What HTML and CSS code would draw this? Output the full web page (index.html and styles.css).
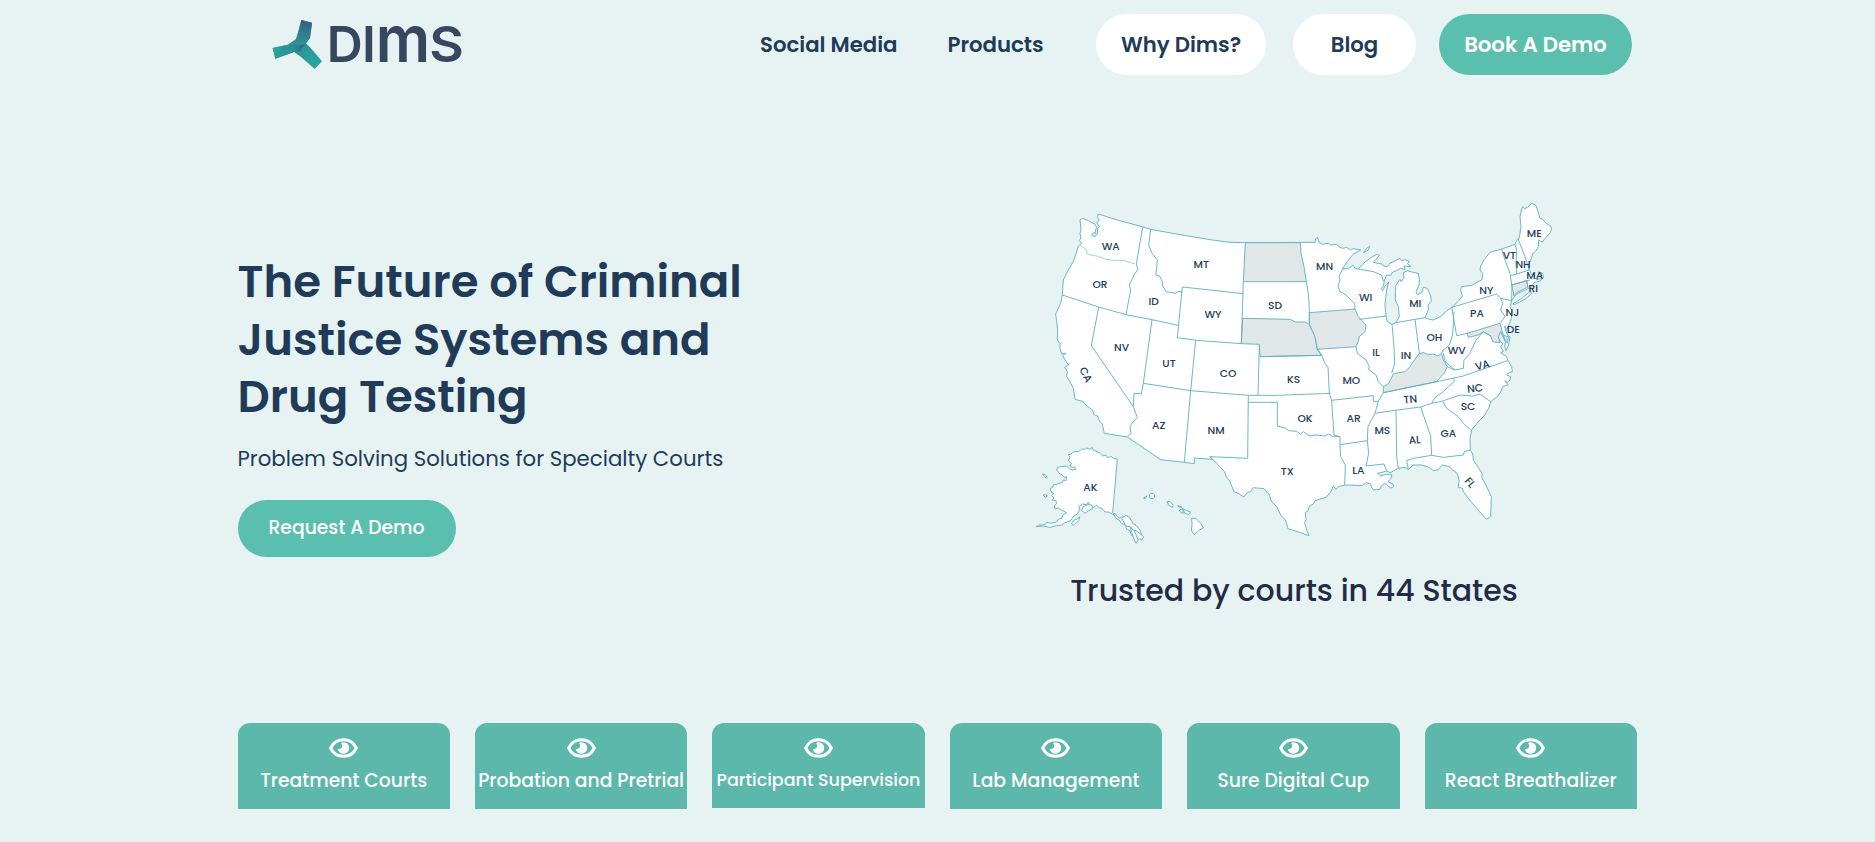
FILE: index.html
```html
<!DOCTYPE html>
<html lang="en">
<head>
<meta charset="utf-8">
<title>DIMS</title>
<link rel="stylesheet" href="styles.css">
</head>
<body>
<svg class="defs" aria-hidden="true">
  <defs>
    <linearGradient id="armA" x1="0" y1="0" x2="0" y2="1"><stop offset="0" stop-color="#36617f"/><stop offset="1" stop-color="#2f9297"/></linearGradient>
    <linearGradient id="armB" x1="0" y1="0" x2="1" y2="0"><stop offset="0" stop-color="#27a59c"/><stop offset=".6" stop-color="#2b8d93"/><stop offset="1" stop-color="#355f7e"/></linearGradient>
    <linearGradient id="armC" x1="0" y1="0" x2=".7" y2="1"><stop offset="0" stop-color="#35607d"/><stop offset=".5" stop-color="#2c8b93"/><stop offset="1" stop-color="#26a59c"/></linearGradient>
    <symbol id="eye" viewBox="0 0 29 20">
      <path d="M1.600 10C4 5 8.600 1.700 14.500 1.700S25 5 27.400 10C25 15 20.400 18.300 14.500 18.300S4 15 1.600 10Z" fill="none" stroke="#fff" stroke-width="2.900"/>
      <path d="M14.500 4.200a5.800 5.800 0 1 1-5.800 6.600c1.800.8 4.400-.3 4.400-2.700 0-1.300-.3-2.300-1-3 .7-.6 1.500-.9 2.400-.9Z" fill="#fff"/>
    </symbol>
  </defs>
</svg>
<header class="header">
  <a class="logo">
    <svg viewBox="0 0 660 210" width="220" height="70" role="img" aria-label="DIMS">
      <path d="M124 30 156 38 150 84 138 100 150 112 186 154 164 177 124 142 102 126 46 146 38 114 84 104 108 88Z" fill="url(#armC)"/>
      <path d="M38 114 84 104 108 96 138 100 120 124 102 126 46 146Z" fill="url(#armB)"/>
      <path d="M124 30 156 38 150 84 134 104 84 104 108 88 116 72Z" fill="url(#armA)"/>
      <g class="wordmark">
        <text x="200" y="157" class="cap" textLength="108" lengthAdjust="spacingAndGlyphs">D</text>
        <text x="306" y="157" class="cap">I</text>
        <text x="347" y="157" class="round" textLength="163" lengthAdjust="spacingAndGlyphs">m</text>
        <text x="508" y="157" class="cap" textLength="104" lengthAdjust="spacingAndGlyphs">S</text>
      </g>
    </svg>
  </a>
  <nav class="nav">
    <a class="link social">Social Media</a>
    <a class="link products">Products</a>
    <a class="pill why">Why Dims?</a>
    <a class="pill blog">Blog</a>
    <a class="pill book">Book A Demo</a>
  </nav>
</header>
<main class="main">
  <section class="hero">
    <div class="intro">
      <h1 class="title">The Future of Criminal<br>Justice Systems and<br>Drug Testing</h1>
      <p class="sub">Problem Solving Solutions for Specialty Courts</p>
      <a class="request">Request A Demo</a>
    </div>
    <div class="coverage">
      <svg class="map" viewBox="0 0 1590 1080" width="530" height="360" role="img" aria-label="Map of states">
        <path class="land" d="M205 72 262 90 336 110 362 118 450 134 540 149 600 157 646 158 855 157 857 147 862 142 868 158 878 163 895 160 902 165 920 163 926 170 938 175 950 172 962 180 970 176 992 180 970 192 957 208 944 226 937 238 958 234 970 226 975 236 985 237 1005 216 1024 202 1042 192 1048 196 1038 208 1030 217 1045 220 1055 222 1062 228 1072 230 1080 220 1100 210 1110 205 1114 212 1126 209 1138 215 1132 221 1142 229 1130 229 1122 228 1125 238 1112 235 1100 242 1088 246 1082 256 1070 255 1064 268 1060 288 1053 296 1058 302 1064 290 1076 276 1070 300 1067 325 1065 345 1068 378 1072 395 1086 403 1098 398 1108 380 1105 350 1096 330 1096 305 1098 285 1110 268 1114 276 1122 262 1120 248 1132 242 1145 246 1165 250 1168 268 1167 285 1158 305 1162 314 1175 308 1180 292 1192 295 1202 318 1204 334 1194 345 1195 360 1185 383 1198 388 1210 390 1235 378 1250 362 1266 352 1285 334 1297 318 1292 300 1294 290 1325 286 1340 278 1356 269 1358 250 1350 240 1352 228 1362 210 1380 187 1415 177 1455 163 1462 148 1468 143 1473 110 1470 80 1477 50 1484 56 1492 52 1505 40 1518 46 1525 68 1530 85 1538 88 1548 100 1562 108 1565 118 1558 132 1545 145 1538 156 1526 151 1525 170 1518 182 1508 192 1502 210 1497 225 1498 238 1502 250 1510 260 1520 269 1535 266 1534 250 1526 246 1538 250 1540 264 1530 273 1512 278 1504 290 1490 298 1460 312 1448 326 1445 332 1440 350 1446 362 1444 385 1438 402 1430 418 1424 408 1428 425 1435 438 1440 440 1436 465 1428 482 1424 470 1426 455 1414 430 1408 402 1402 405 1408 430 1404 445 1418 462 1412 470 1420 485 1412 488 1424 496 1430 500 1432 508 1440 522 1445 530 1447 545 1436 548 1430 555 1442 560 1440 570 1433 576 1424 573 1435 584 1418 590 1412 606 1402 620 1382 635 1376 655 1362 678 1345 695 1325 720 1320 745 1321 780 1328 792 1330 810 1345 832 1357 852 1355 862 1370 890 1384 920 1382 980 1370 988 1358 976 1338 952 1325 938 1310 918 1300 905 1298 895 1285 892 1287 870 1282 850 1265 838 1258 830 1238 825 1232 830 1224 840 1210 842 1198 832 1175 825 1150 825 1135 838 1125 832 1105 835 1090 843 1080 848 1070 843 1052 848 1042 850 1052 858 1068 853 1086 855 1082 866 1074 875 1088 882 1091 890 1082 894 1070 884 1064 880 1054 888 1050 898 1030 900 1025 892 1022 882 1010 878 995 887 980 886 945 885 925 890 918 898 910 888 902 906 888 922 855 932 850 942 838 948 834 962 826 968 828 990 824 998 830 1020 837 1037 806 1026 775 1017 766 990 752 975 740 950 725 935 718 915 702 896 670 893 662 905 652 907 642 921 625 910 612 905 600 875 590 862 583 845 565 825 540 800 547 808 493 804 493 821 463 817 392 809 292 741 223 730 217 702 208 693 203 678 192 674 188 660 170 648 160 635 135 628 130 595 120 575 110 560 112 545 104 532 116 525 105 510 98 497 107 490 95 492 90 476 90 460 82 450 83 420 80 395 77 372 92 340 97 315 100 270 115 240 130 215 140 185 145 168 155 160 148 152 153 143 150 130 153 120 150 90 157 85 175 92 195 103 200 112 196 122 198 130 190 128 185 136 195 140 203 130 202 116 208 110 200 98 208 92 202 80Z"/>
        <path class="land" d="M115 793 120 803 115 812 125 822 119 827 127 832 133 830 137 838 127 840 118 836 110 828 95 830 82 832 80 840 90 852 96 854 102 862 110 860 108 872 100 870 97 878 85 880 78 884 70 884 68 892 60 896 64 906 71 910 65 916 72 924 66 930 78 932 80 941 73 946 75 957 85 954 95 960 110 968 98 976 95 985 84 988 80 996 62 1000 50 997 45 1004 25 1006 18 1010 40 1008 60 1012 80 1007 95 1005 105 998 120 993 132 978 142 972 150 958 146 950 158 942 170 944 175 936 182 948 190 952 200 946 208 954 215 954 225 966 236 966 248 974 255 970 262 980 270 985 278 978 285 985 290 976 298 985 305 998 314 1003 318 1015 330 1022 332 1032 341 1040 336 1050 328 1046 320 1052 312 1040 304 1036 300 1022 290 1018 285 1004 274 1000 268 990 258 986 248 968 262 807 250 806 245 800 232 802 228 795 218 798 208 788 198 784 188 778 186 772 180 778 170 774 165 778 155 777 145 785 130 786 120 794Z"/>
        <g class="land">
          <path d="M160 950 172 944 185 945 188 955 176 962 165 970 155 962ZM125 1000 132 990 140 988 150 980 146 992 138 1000 128 1006ZM38 852 46 854 52 862 48 865ZM40 915 46 914 52 918 46 923ZM275 985 288 976 300 984 308 1000 318 1006 330 1020 335 1035 318 1022 308 1020 300 1010 288 1008ZM300 1010 312 1022 318 1034 324 1050 318 1060 310 1042Z"/>
          <circle cx="366" cy="918" r="8"/><path d="M341 924 350 918 346 926Z"/><path d="M411 935 420 935 430 945 427 952 416 946Z"/>
          <path d="M443 948 456 950 452 953ZM448 960 458 956 460 970 452 968ZM460 956 470 962 482 966 476 974 464 970Z"/>
          <path d="M485 985 498 985 512 1000 520 1014 505 1022 493 1034 484 1022 486 1005Z"/>
          <path d="M1000 188 1010 175 1019 169 1015 180Z"/><path d="M1448 342 1475 325 1500 305 1505 310 1485 328 1455 343Z"/>
        </g>
        <g class="empty">
          <path d="M646 158H811L813 190 822 230 829 275 640 275Z"/>
          <path d="M638 385 780 388 796 396 825 396 838 403 855 440 862 478 875 496 690 500 688 463 634 461Z"/>
          <path d="M838 368 975 357 985 380 1008 405 1005 425 988 440 985 455 978 470 862 478 855 440 838 403Z"/>
          <path d="M1060 608V590L1073 583 1080 572 1090 552 1105 548 1125 545 1140 530 1150 515 1168 490 1182 488 1195 494 1210 492 1224 498 1235 490 1240 510 1252 530 1242 550 1220 575Z"/>
          <path d="M1312 430 1410 400 1420 436 1435 440 1432 460 1412 425 1405 440 1410 458 1388 455 1382 438 1360 425 1345 435 1315 442Z"/>
          <path d="M1445 285 1490 272 1494 291 1460 308 1452 318Z"/>
        </g>
        <g class="border">
          <path class="faint" d="M150 166 168 178 172 193 200 198 225 207 250 211 285 212 315 222"/>
          <path d="M338 112 319 222 324 238 312 255 305 270 298 285 302 300 288 374M97 315 206 351 288 374 366 389 444 406M206 351 184 467 310 650M366 389 340 580M362 118 356 165 366 190 382 210 380 235 377 255 388 257 397 275 398 288 408 305 422 307 435 310 447 304 457 305M457 291 640 311M457 291 442 443 500 451 634 461M640 275 634 461M497 451 482 602M340 580 334 611 312 610 310 650 322 682 300 707 303 730 292 741M340 580 482 602 655 616H740L902 610M482 602 463 817M688 463 684 616M655 616 653 805 540 800M655 637H742V708L768 715 775 722 800 724 812 732 820 725 840 738 860 735 885 738 895 732 910 740H930"/>
          <path d="M838 368 837 340 835 310 829 275M838 403V368M975 357 974 340 962 330 945 312 930 305 924 288 930 270 927 260 937 238M985 237 1030 245 1055 255 1060 275M988 388 1070 378M1086 403 1092 470 1094 520 1085 550M978 470 982 490 1008 510 1018 530 1015 538 1038 555 1045 575 1060 590M1098 398 1155 388 1185 383M1155 388 1168 490M862 478 875 496 885 520 894 532 898 610 905 631 1030 617 1030 634 1045 634M690 500 875 496M905 631 912 735 930 740V764M930 764 1012 752M930 764 932 800 946 825 944 885M1060 608 1045 634 1035 670 1014 710 1012 752 1016 790 1008 828 1062 822 1070 843M1035 670 1095 661 1172 651 1205 640 1235 634 1290 615 1330 618 1350 612 1382 635M1098 661 1100 800 1105 835M1172 651 1202 738 1205 796 1150 805 1130 812 1135 838M1205 796 1240 802 1300 795 1303 785 1320 780M1238 634 1250 655 1285 680 1300 700 1325 722M1205 640 1215 622 1240 605 1255 590 1272 575 1272 565M1220 575 1300 558 1432 512M1060 608 1220 575M1265 352 1280 437 1312 430M1272 365 1270 400 1268 435 1258 465 1240 480 1235 490M1240 490 1245 515 1275 540 1300 535 1302 510 1320 490 1338 450 1360 425 1382 438M1252 530 1275 540M1265 352 1400 312 1412 325 1445 332M1412 325 1418 340 1412 360 1425 380 1410 400M1415 177 1425 210 1440 250 1446 290 1445 332M1455 163 1460 180 1458 220 1460 252M1443 256 1460 252 1498 240M1464 146 1485 200 1498 240M1445 285 1490 272 1500 270M1490 272 1494 292"/>
        </g>
        <g class="labels" transform="translate(0 -1)">
          <text x="242" y="182">WA</text><text x="210" y="295">OR</text><text x="371" y="345">ID</text><text x="514" y="235">MT</text><text x="549" y="386">WY</text><text x="735" y="357">SD</text><text x="275" y="485">NV</text><text x="417" y="531">UT</text>
          <text transform="translate(158 560) rotate(62)">CA</text>
          <text x="594" y="561">CO</text><text x="791" y="580">KS</text><text x="386" y="718">AZ</text><text x="558" y="733">NM</text><text x="772" y="856">TX</text><text x="825" y="696">OK</text><text x="181" y="905">AK</text><text x="884" y="240">MN</text><text x="1007" y="335">WI</text><text x="1156" y="351">MI</text><text x="1038" y="500">IL</text><text x="1128" y="509">IN</text><text x="1213" y="455">OH</text><text x="1341" y="383">PA</text><text x="1369" y="312">NY</text><text x="1438" y="207">VT</text><text x="1479" y="236">NH</text><text x="1513" y="141">ME</text><text x="1514" y="269">MA</text><text x="1510" y="307">RI</text><text x="1447" y="380">NJ</text><text x="1450" y="431">DE</text><text x="1280" y="494">WV</text>
          <text transform="translate(1360 537) rotate(-15)">VA</text>
          <text x="964" y="583">MO</text><text x="971" y="697">AR</text><text x="985" y="852">LA</text><text x="1057" y="733">MS</text>
          <text transform="translate(1155 762) rotate(-4)">AL</text><text x="1255" y="742">GA</text><text transform="translate(1142 640) rotate(-5)">TN</text><text transform="translate(1336 607) rotate(-6)">NC</text><text x="1314" y="660">SC</text><text transform="translate(1312 886) rotate(48)">FL</text>
        </g>
      </svg>
      <p class="trusted">Trusted by courts in 44 States</p>
    </div>
  </section>
  <section class="cards">
    <a class="card"><svg class="eye"><use href="#eye"/></svg><span>Treatment Courts</span></a>
    <a class="card"><svg class="eye"><use href="#eye"/></svg><span>Probation and Pretrial</span></a>
    <a class="card compact"><svg class="eye"><use href="#eye"/></svg><span>Participant Supervision</span></a>
    <a class="card"><svg class="eye"><use href="#eye"/></svg><span>Lab Management</span></a>
    <a class="card"><svg class="eye"><use href="#eye"/></svg><span>Sure Digital Cup</span></a>
    <a class="card"><svg class="eye"><use href="#eye"/></svg><span>React Breathalizer</span></a>
  </section>
</main>
</body>
</html>
```
FILE: styles.css
```css
* { box-sizing: border-box; }
body {
  margin: 0;
  height: 842px;
  overflow: hidden;
  background: #e7f3f3;
  color: #203b58;
  font-family: Poppins, Inter, sans-serif;
}
.defs { position: absolute; width: 0; height: 0; }
.header {
  display: flex;
  justify-content: space-between;
  align-items: flex-start;
  width: 1400px;
  height: 90px;
  margin: 0 auto;
  padding-left: 22.5px;
}
.logo { padding-top: 10px; }
.logo svg { display: block; overflow: visible; }
.wordmark { fill: #37475f; font-family: Inter, sans-serif; }
.cap { font-size: 150px; font-weight: 600; }
.round { font-size: 190px; font-weight: 600; }
.nav {
  display: flex;
  align-items: center;
  padding: 14px 5.5px 0 0;
  font-size: 21.25px;
  font-weight: 600;
  line-height: 61px;
  white-space: nowrap;
}
.social { width: 187.5px; }
.products { width: 148.5px; }
.pill {
  height: 61px;
  border-radius: 31px;
  background: #fff;
  text-align: center;
}
.why { width: 170px; margin-right: 27px; }
.blog { width: 123px; margin-right: 23px; }
.book { width: 193px; background: #5bbfb0; color: #fff; }
.main { width: 1400px; margin: 0 auto; }
.hero { display: flex; justify-content: space-between; height: 633px; }
.intro { padding-top: 163px; white-space: nowrap; }
.title { margin: 0; font-size: 45px; font-weight: 600; line-height: 57.5px; }
.sub { margin: 17.5px 0 0; font-size: 21.25px; font-weight: 400; line-height: 32px; }
.request {
  display: block;
  width: 218px;
  height: 57px;
  margin-top: 25px;
  border-radius: 29px;
  background: #5bbfb0;
  color: #fff;
  font-size: 18.75px;
  font-weight: 500;
  line-height: 55px;
  text-align: center;
}
.coverage { width: 530px; margin-right: 77.5px; padding-top: 100px; }
.map { display: block; }
.land, .empty, .border { stroke: #5fb0c8; stroke-width: 2.800; stroke-linejoin: round; }
.land { fill: #fff; }
.empty { fill: #e0e7e6; }
.border { fill: none; }
.faint { opacity: .6; }
.labels { fill: #233d5a; font-size: 32px; font-weight: 500; text-anchor: middle; }
.trusted {
  margin: 19px 2px 0 0;
  color: #232b47;
  font-size: 30px;
  font-weight: 500;
  line-height: 44px;
  text-align: center;
  white-space: nowrap;
}
.cards {
  display: grid;
  grid-template-columns: repeat(6, 1fr);
  gap: 25px;
  align-items: start;
  width: 1399.5px;
}
.card {
  display: flex;
  flex-direction: column;
  align-items: center;
  height: 86px;
  padding-top: 15px;
  border-radius: 12px 12px 0 0;
  background: #5bb8aa;
  color: #fff;
  font-size: 18.75px;
  font-weight: 500;
  line-height: 28px;
  white-space: nowrap;
}
.eye { width: 29px; height: 20px; margin-bottom: 9px; flex: none; }
.compact { height: 85px; font-size: 17.5px; line-height: 27px; }
```
